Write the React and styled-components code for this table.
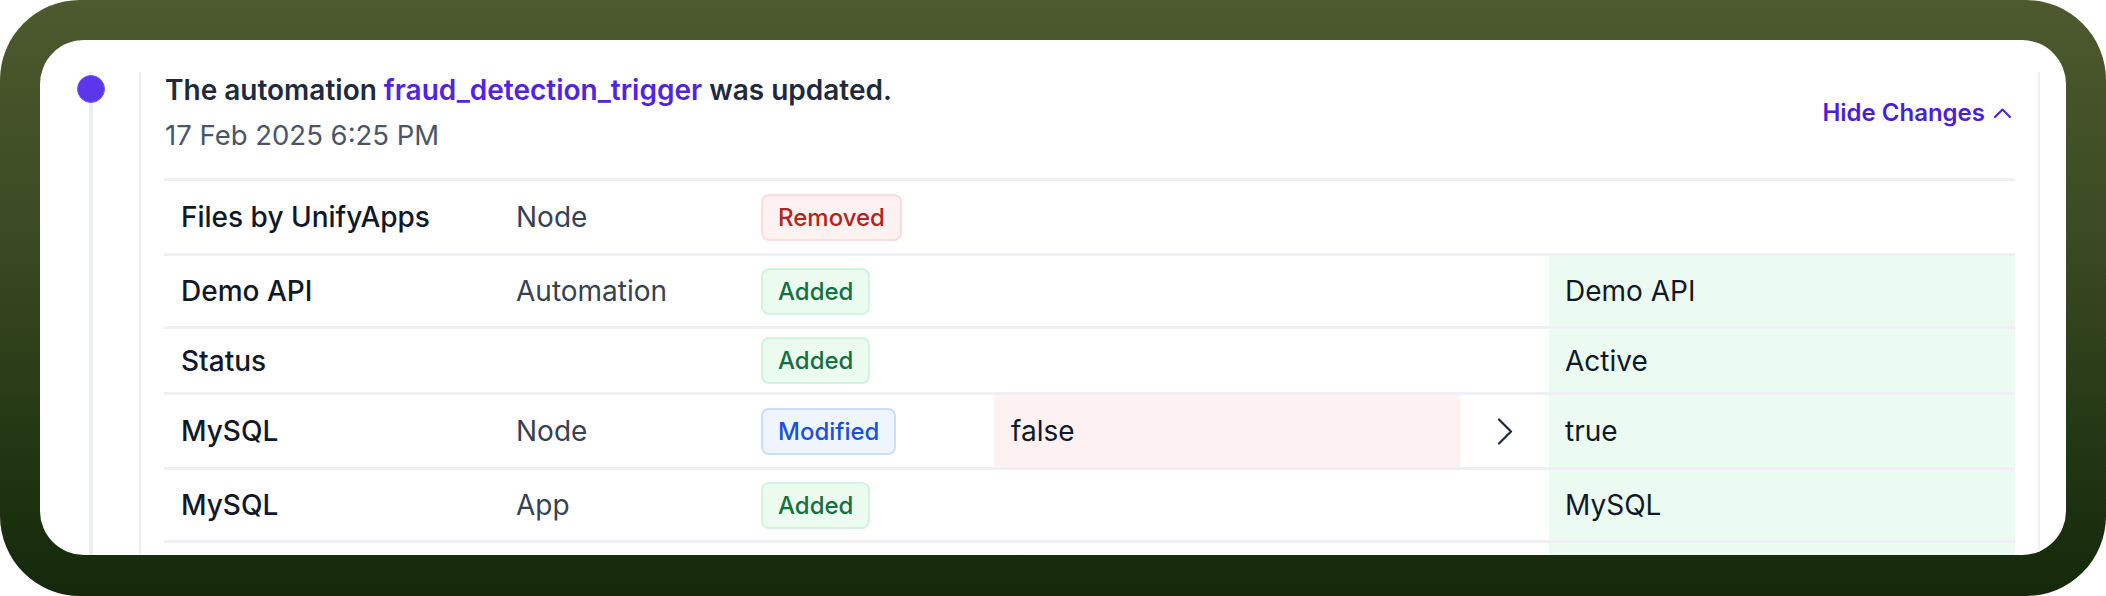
import React from 'react';
import styled, { createGlobalStyle, css } from 'styled-components';

const GlobalStyle = createGlobalStyle`
    html, body {
        margin: 0;
        padding: 0;
        background: #ffffff;
    }

    body {
        font-family: Inter, "Noto Sans", "Liberation Sans", sans-serif;
        -webkit-font-smoothing: antialiased;
    }
`;

const Frame = styled.div`
    width: 2106px;
    height: 596px;
    box-sizing: border-box;
    padding: 40px 40px 41px 40px;
    border-radius: 80px;
    background: linear-gradient(180deg, #4e592e 0%, #3a4a22 40%, #13290a 100%);
`;

const Card = styled.div`
    height: 100%;
    box-sizing: border-box;
    background: #ffffff;
    border-radius: 44px;
    overflow: hidden;
    display: flex;
    padding: 32px 26px 0 49px;
`;

const Timeline = styled.div`
    position: relative;
    width: 4px;
    margin-right: 46px;
    background: #eaebf3;
    flex-shrink: 0;
`;

const Dot = styled.span`
    position: absolute;
    top: 3px;
    left: -12px;
    width: 26px;
    height: 26px;
    border-radius: 50%;
    background: #5b36ea;
    border: 1px solid #7a5cf0;
`;

const Panel = styled.div`
    flex: 1;
    min-width: 0;
    border-left: 2px solid #eef0f5;
    border-right: 2px solid #eef0f5;
    padding: 0 23px;
`;

const Header = styled.div`
    display: flex;
    align-items: center;
    justify-content: space-between;
    padding: 0 4px 25px 1px;
`;

const Title = styled.div`
    font-size: 28px;
    line-height: 36px;
    font-weight: 600;
    color: #1f2a3d;
`;

const Link = styled.span`
    color: #5024e2;
`;

const DateText = styled.div`
    margin-top: 9px;
    font-size: 27.5px;
    line-height: 36px;
    color: #4a5568;
`;

const HideButton = styled.button`
    display: flex;
    align-items: center;
    gap: 9px;
    border: none;
    background: none;
    padding: 0;
    font-family: inherit;
    font-size: 24px;
    font-weight: 600;
    color: #4b1fd8;
    cursor: pointer;
`;

const Table = styled.div`
    border-top: 3px solid #efeff5;
`;

const Row = styled.div`
    display: grid;
    grid-template-columns: 336px 245px 249px 466px 89px 466px;
    height: ${p => p.$h}px;
    box-sizing: border-box;
    border-bottom: 3px solid #efeff5;
`;

const Cell = styled.div`
    display: flex;
    align-items: center;
    padding-left: 16px;
    font-size: 28px;
    color: #111827;
    white-space: nowrap;
`;

const NameCell = styled(Cell)`
    padding-left: 17px;
    font-weight: 500;
`;

const TypeCell = styled(Cell)`
    color: #364152;
`;

const ValueCell = styled(Cell)`
    ${p => p.$tone === 'old' && css`
        background: #fef1f1;
        padding-left: 17px;
    `}
    ${p => p.$tone === 'new' && css`
        background: #ebfbf1;
    `}
`;

const ArrowCell = styled(Cell)`
    justify-content: center;
    padding-left: 0;
    color: #1f2937;
`;

const badgeTones = {
    removed: css`
        background: #fef1f1;
        border-color: #fcdcdc;
        color: #b4231c;
    `,
    added: css`
        background: #ebfbf0;
        border-color: #cff5dc;
        color: #16703f;
    `,
    modified: css`
        background: #eef5ff;
        border-color: #c9defb;
        color: #1d50d6;
    `
};

const Badge = styled.span`
    display: inline-flex;
    align-items: center;
    height: 47px;
    box-sizing: border-box;
    padding: 0 15px;
    border: 2px solid;
    border-radius: 8px;
    font-size: 24px;
    font-weight: 500;
    ${p => badgeTones[p.$status]}
`;

const labels = {
    removed: 'Removed',
    added: 'Added',
    modified: 'Modified'
};

const rows = [
    {name: 'Files by UnifyApps', type: 'Node', status: 'removed', h: 75},
    {name: 'Demo API', type: 'Automation', status: 'added', newVal: 'Demo API', h: 73},
    {name: 'Status', type: '', status: 'added', newVal: 'Active', h: 66},
    {name: 'MySQL', type: 'Node', status: 'modified', oldVal: 'false', newVal: 'true', h: 75},
    {name: 'MySQL', type: 'App', status: 'added', newVal: 'MySQL', h: 73},
    {name: 'MySQL', type: 'Connection', status: 'added', newVal: 'MySQL', h: 73}
];

const ChevronUp = () => (
    <svg width="17" height="10" viewBox="0 0 17 10" fill="none">
        <path d="M1 9L8.5 1.5L16 9" stroke="currentColor" strokeWidth="2" strokeLinecap="round" strokeLinejoin="round" />
    </svg>
);

const ChevronRight = () => (
    <svg width="16" height="27" viewBox="0 0 16 27" fill="none">
        <path d="M2 1.5L14 13.5L2 25.5" stroke="currentColor" strokeWidth="2.2" strokeLinecap="round" strokeLinejoin="round" />
    </svg>
);

const App = () => {
    return (
        <>
            <GlobalStyle />
            <Frame>
                <Card>
                    <Timeline>
                        <Dot />
                    </Timeline>
                    <Panel>
                        <Header>
                            <div>
                                <Title>
                                    The automation <Link>fraud_detection_trigger</Link> was updated.
                                </Title>
                                <DateText>17 Feb 2025 6:25 PM</DateText>
                            </div>
                            <HideButton>
                                Hide Changes <ChevronUp />
                            </HideButton>
                        </Header>
                        <Table>
                            {rows.map((row, i) => (
                                <Row key={i} $h={row.h}>
                                    <NameCell>{row.name}</NameCell>
                                    <TypeCell>{row.type}</TypeCell>
                                    <Cell>
                                        <Badge $status={row.status}>{labels[row.status]}</Badge>
                                    </Cell>
                                    <ValueCell $tone={row.oldVal ? 'old' : undefined}>{row.oldVal}</ValueCell>
                                    <ArrowCell>{row.oldVal && <ChevronRight />}</ArrowCell>
                                    <ValueCell $tone={row.newVal ? 'new' : undefined}>{row.newVal}</ValueCell>
                                </Row>
                            ))}
                        </Table>
                    </Panel>
                </Card>
            </Frame>
        </>
    );
};

export default App;
